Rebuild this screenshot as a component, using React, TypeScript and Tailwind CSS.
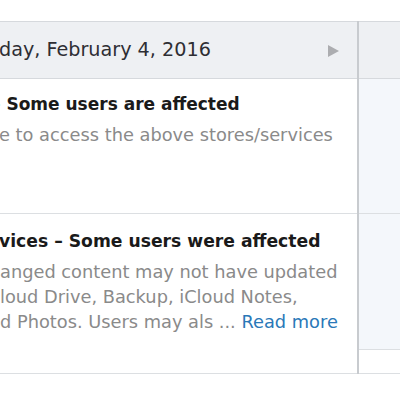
import React from 'react';

const font = { fontFamily: '"DejaVu Sans", "Noto Sans", sans-serif' };

const App = () => {
  return (
    <div className="w-[400px] h-[400px] bg-white overflow-hidden" style={font}>
      <div className="pt-[21px] flex">
        {/* Day column */}
        <div className="w-[359px] shrink-0 border-r-2 border-[#c8cbcf] overflow-hidden">
          <div className="h-[58px] bg-[#eef0f3] border-t border-b border-[#d6d9dd] flex items-center justify-between pr-[18px]">
            <span className="whitespace-nowrap text-[19.2px] text-[#2e2e33] -ml-[1px]">day, February 4, 2016</span>
            <svg width="11" height="12" viewBox="0 0 11 12" className="mt-[1px]">
              <path d="M0 0 L11 6 L0 12 Z" fill="#acadb0" />
            </svg>
          </div>

          <div className="h-[135px] border-b border-[#dcdfe2] pt-[13px] whitespace-nowrap">
            <div className="text-[17px] font-bold text-[#1a1a1a] leading-[25px] -ml-[8px]">– Some users are affected</div>
            <div className="text-[17.8px] text-[#8a8a8a] leading-[25px] mt-[5px] -ml-[1px]">e to access the above stores/services</div>
          </div>

          <div className="h-[160px] border-b border-[#dcdfe2] pt-[15px] whitespace-nowrap">
            <div className="text-[17.2px] font-bold text-[#1a1a1a] leading-[25px] -ml-[1px]">vices – Some users were affected</div>
            <div className="text-[17.8px] text-[#8a8a8a] leading-[25px] mt-[5px]">
              <div>anged content may not have updated</div>
              <div>loud Drive, Backup, iCloud Notes,</div>
              <div>
                d Photos. Users may als ... <span className="text-[#2a78b8]">Read more</span>
              </div>
            </div>
          </div>
        </div>

        {/* Next column */}
        <div className="flex-1">
          <div className="h-[58px] bg-[#eef0f3] border-t border-b border-[#d6d9dd]" />
          <div className="h-[135px] bg-[#f4f7fb] border-b border-[#dcdfe2]" />
          <div className="h-[136px] bg-[#f4f7fb] border-b border-[#dcdfe2]" />
          <div className="h-[24px] border-b border-[#dcdfe2]" />
        </div>
      </div>
    </div>
  );
};

export default App;
